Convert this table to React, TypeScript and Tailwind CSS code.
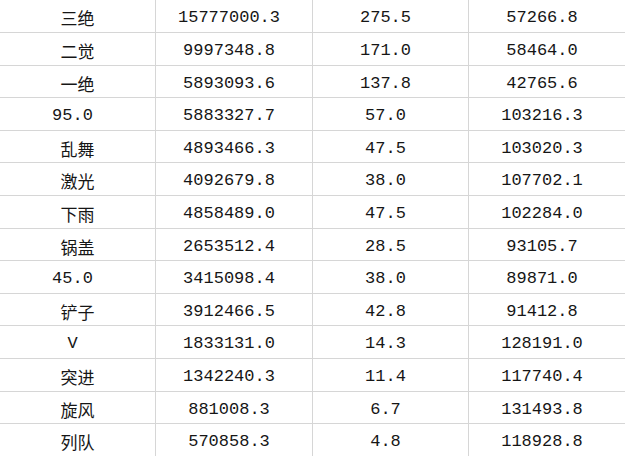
const rows: [string, string, string, string][] = [
  ['三绝', '15777000.3', '275.5', '57266.8'],
  ['二觉', '9997348.8', '171.0', '58464.0'],
  ['一绝', '5893093.6', '137.8', '42765.6'],
  ['95.0', '5883327.7', '57.0', '103216.3'],
  ['乱舞', '4893466.3', '47.5', '103020.3'],
  ['激光', '4092679.8', '38.0', '107702.1'],
  ['下雨', '4858489.0', '47.5', '102284.0'],
  ['锅盖', '2653512.4', '28.5', '93105.7'],
  ['45.0', '3415098.4', '38.0', '89871.0'],
  ['铲子', '3912466.5', '42.8', '91412.8'],
  ['V', '1833131.0', '14.3', '128191.0'],
  ['突进', '1342240.3', '11.4', '117740.4'],
  ['旋风', '881008.3', '6.7', '131493.8'],
  ['列队', '570858.3', '4.8', '118928.8'],
];

const isCjk = (s: string) => /[\u4e00-\u9fff]/.test(s);

function Cell({ value, last }: { value: string; last?: boolean }) {
  const cjk = isCjk(value);
  return (
    <div
      className={`flex items-center justify-center pt-[4px] text-[#161616] ${
        last ? '' : 'border-r border-[#d6d6d6]'
      } ${
        cjk
          ? "text-[17px] font-['Noto_Sans_CJK_SC',sans-serif]"
          : "pr-[10px] text-[17px] font-['Liberation_Mono',monospace]"
      }`}
    >
      {value}
    </div>
  );
}

export default function App() {
  return (
    <div className="w-[625px] h-[456px] overflow-hidden bg-white">
      {rows.map((row, i) => (
        <div
          key={i}
          className={`grid grid-cols-[156px_157px_156px_156px] border-b border-[#d6d6d6] ${
            i === 0 ? 'h-[33px]' : 'h-[32.6px]'
          }`}
        >
          {row.map((v, j) => (
            <Cell key={j} value={v} last={j === 3} />
          ))}
        </div>
      ))}
    </div>
  );
}
